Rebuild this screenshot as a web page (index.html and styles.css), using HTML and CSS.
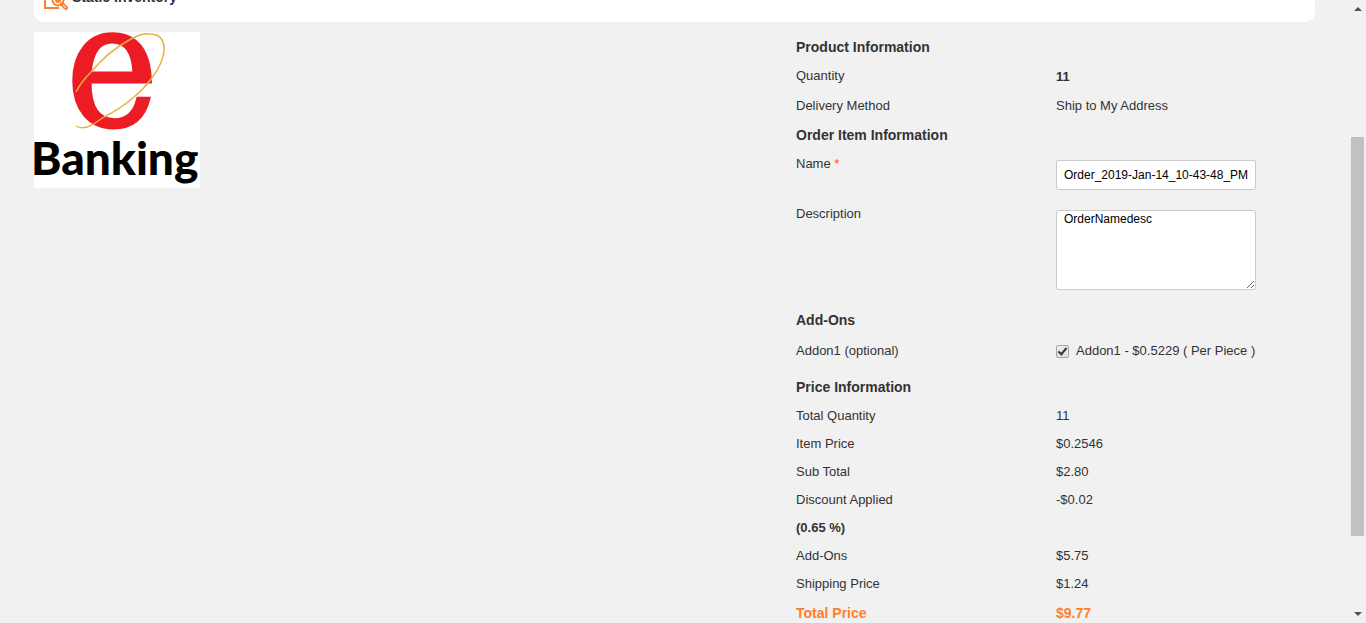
FILE: index.html
```html
<!DOCTYPE html>
<html lang="en">
<head>
<meta charset="utf-8">
<title>Static Inventory</title>
<link rel="stylesheet" href="styles.css">
</head>
<body>
<div class="viewport">
  <div class="page">
    <header class="title-bar">
      <svg class="title-icon" width="26" height="26" viewBox="0 0 26 26" fill="none" stroke="#ff7f27" stroke-width="2">
        <path d="M8 24H3V3h17v6M8 24h9"/>
        <circle cx="16" cy="16" r="5.500"/>
        <circle cx="16" cy="16" r="2" fill="#ff7f27"/>
        <path d="M20 20l4 4" stroke-width="4" stroke-linecap="round"/>
        <path d="M21 21l3 3" stroke="#ffffff" stroke-width="1"/>
      </svg>
      <h1 class="title">Static Inventory</h1>
    </header>
    <main class="content">
      <div class="preview">
        <svg class="logo" width="166" height="156" viewBox="0 0 166 156" role="img" aria-label="e Banking">
          <rect width="166" height="156" fill="#ffffff"/>
          <text class="logo-e" x="32" y="94">e</text>
          <path d="M42 60C46 52 51 46 57 40C67 28 82 15 97 7C105 3 111 1 115 2C121 2 126 4 128 8C134 18 126 36 117 47C112 54 106 60 100 65C91 73 80 80 70 85C63 90 57 94 53 95C49 96 45 96 42 94" fill="none" stroke="#e8b040" stroke-width="1.500"/>
          <text class="logo-word" x="-3" y="143">Banking</text>
        </svg>
      </div>
      <form class="details">
        <h2 class="heading">Product Information</h2>
        <div class="row row-quantity"><span>Quantity</span><strong class="quantity">11</strong></div>
        <div class="row"><span>Delivery Method</span><span>Ship to My Address</span></div>
        <h2 class="heading heading-order">Order Item Information</h2>
        <div class="row row-name"><label for="name">Name <span class="required">*</span></label><input class="field" id="name" type="text" value="Order_2019-Jan-14_10-43-48_PM"></div>
        <div class="row row-description"><label for="description">Description</label><textarea class="field field-area" id="description">OrderNamedesc</textarea></div>
        <h2 class="heading">Add-Ons</h2>
        <div class="row row-addon"><span>Addon1 (optional)</span><label class="option"><input class="check" type="checkbox" checked>Addon1 - $0.5229 ( Per Piece )</label></div>
        <h2 class="heading">Price Information</h2>
        <div class="row"><span>Total Quantity</span><span>11</span></div>
        <div class="row"><span>Item Price</span><span>$0.2546</span></div>
        <div class="row"><span>Sub Total</span><span>$2.80</span></div>
        <div class="row"><span>Discount Applied</span><span>-$0.02</span></div>
        <div class="row"><strong>(0.65 %)</strong></div>
        <div class="row"><span>Add-Ons</span><span>$5.75</span></div>
        <div class="row"><span>Shipping Price</span><span>$1.24</span></div>
        <div class="row row-total"><span>Total Price</span><span>$9.77</span></div>
      </form>
    </main>
  </div>
  <div class="scrollbar" aria-hidden="true">
    <svg width="17" height="17" viewBox="0 0 17 17"><path d="M5 11l4-4 4 4z" fill="#505050"/></svg>
    <div class="track"><div class="thumb"></div></div>
    <svg width="17" height="17" viewBox="0 0 17 17"><path d="M5 6l4 4 4-4z" fill="#505050"/></svg>
  </div>
</div>
</body>
</html>
```
FILE: styles.css
```css
* { box-sizing: border-box; }

body {
  margin: 0;
  background: #f1f1f1;
  color: #333333;
  font-family: "Liberation Sans", Arial, sans-serif;
  font-size: 13px;
  line-height: 28px;
}

.viewport {
  display: flex;
  height: 100vh;
  overflow: hidden;
}

.page {
  flex: 1;
  padding: 0 34px;
}

.title-bar {
  display: flex;
  align-items: center;
  gap: 4px;
  height: 50px;
  margin-top: -28px;
  padding: 0 8px;
  border-radius: 0 0 10px 10px;
  background: #ffffff;
}

.title { margin: 0; font-size: 14px; }

.content {
  display: grid;
  grid-template-columns: 1fr 519px;
  padding-top: 10px;
}

.logo { display: block; }

.logo-e {
  fill: #ed1c24;
  stroke: #ed1c24;
  stroke-width: 3px;
  font: 173px "DejaVu Serif Condensed", "Liberation Serif", serif;
}

.logo-word {
  fill: #000000;
  font: 900 46px Lato, sans-serif;
}

.details { padding-top: 1px; }

.heading {
  margin: 0;
  font-size: 14px;
  line-height: 28px;
}

.heading-order { margin-top: 2px; }

.row {
  display: grid;
  grid-template-columns: 260px 1fr;
  align-items: start;
  height: 28px;
  line-height: 30px;
}

.row-quantity { height: 30px; }
.quantity { padding-top: 1px; }
.row-name { height: 50px; }
.row-description { height: 107px; }
.row-addon { margin: 2px 0 9px; }

.row-total {
  margin-top: 2px;
  color: #ff7f27;
  font-size: 14px;
  font-weight: bold;
  line-height: 28px;
}

.required { color: #ff4532; }

.field {
  width: 200px;
  height: 30px;
  margin: 11px 0 0;
  padding: 0 7px;
  border: 1px solid #cccccc;
  border-radius: 2px;
  background: #ffffff;
  color: #000000;
  font: 12px "Liberation Sans", Arial, sans-serif;
}

.field-area {
  height: 80px;
  padding-top: 1px;
  resize: both;
}

.option {
  display: flex;
  align-items: center;
  gap: 7px;
}

.check {
  appearance: none;
  width: 13px;
  height: 13px;
  margin: 0;
  border: 1px solid #a6a6a6;
  border-radius: 2px;
  background: linear-gradient(#eeeeee, #dddddd);
}

.check:checked::before {
  content: "";
  display: block;
  box-sizing: border-box;
  width: 5px;
  height: 9px;
  margin: 0 0 0 3px;
  border: solid #333333;
  border-width: 0 2px 2px 0;
  transform: rotate(40deg);
}

.scrollbar {
  display: flex;
  flex-direction: column;
  width: 17px;
  background: #f1f1f1;
}

.track {
  flex: 1;
  padding: 120px 2px 0;
}

.thumb {
  height: 85%;
  background: #c1c1c1;
}
```
